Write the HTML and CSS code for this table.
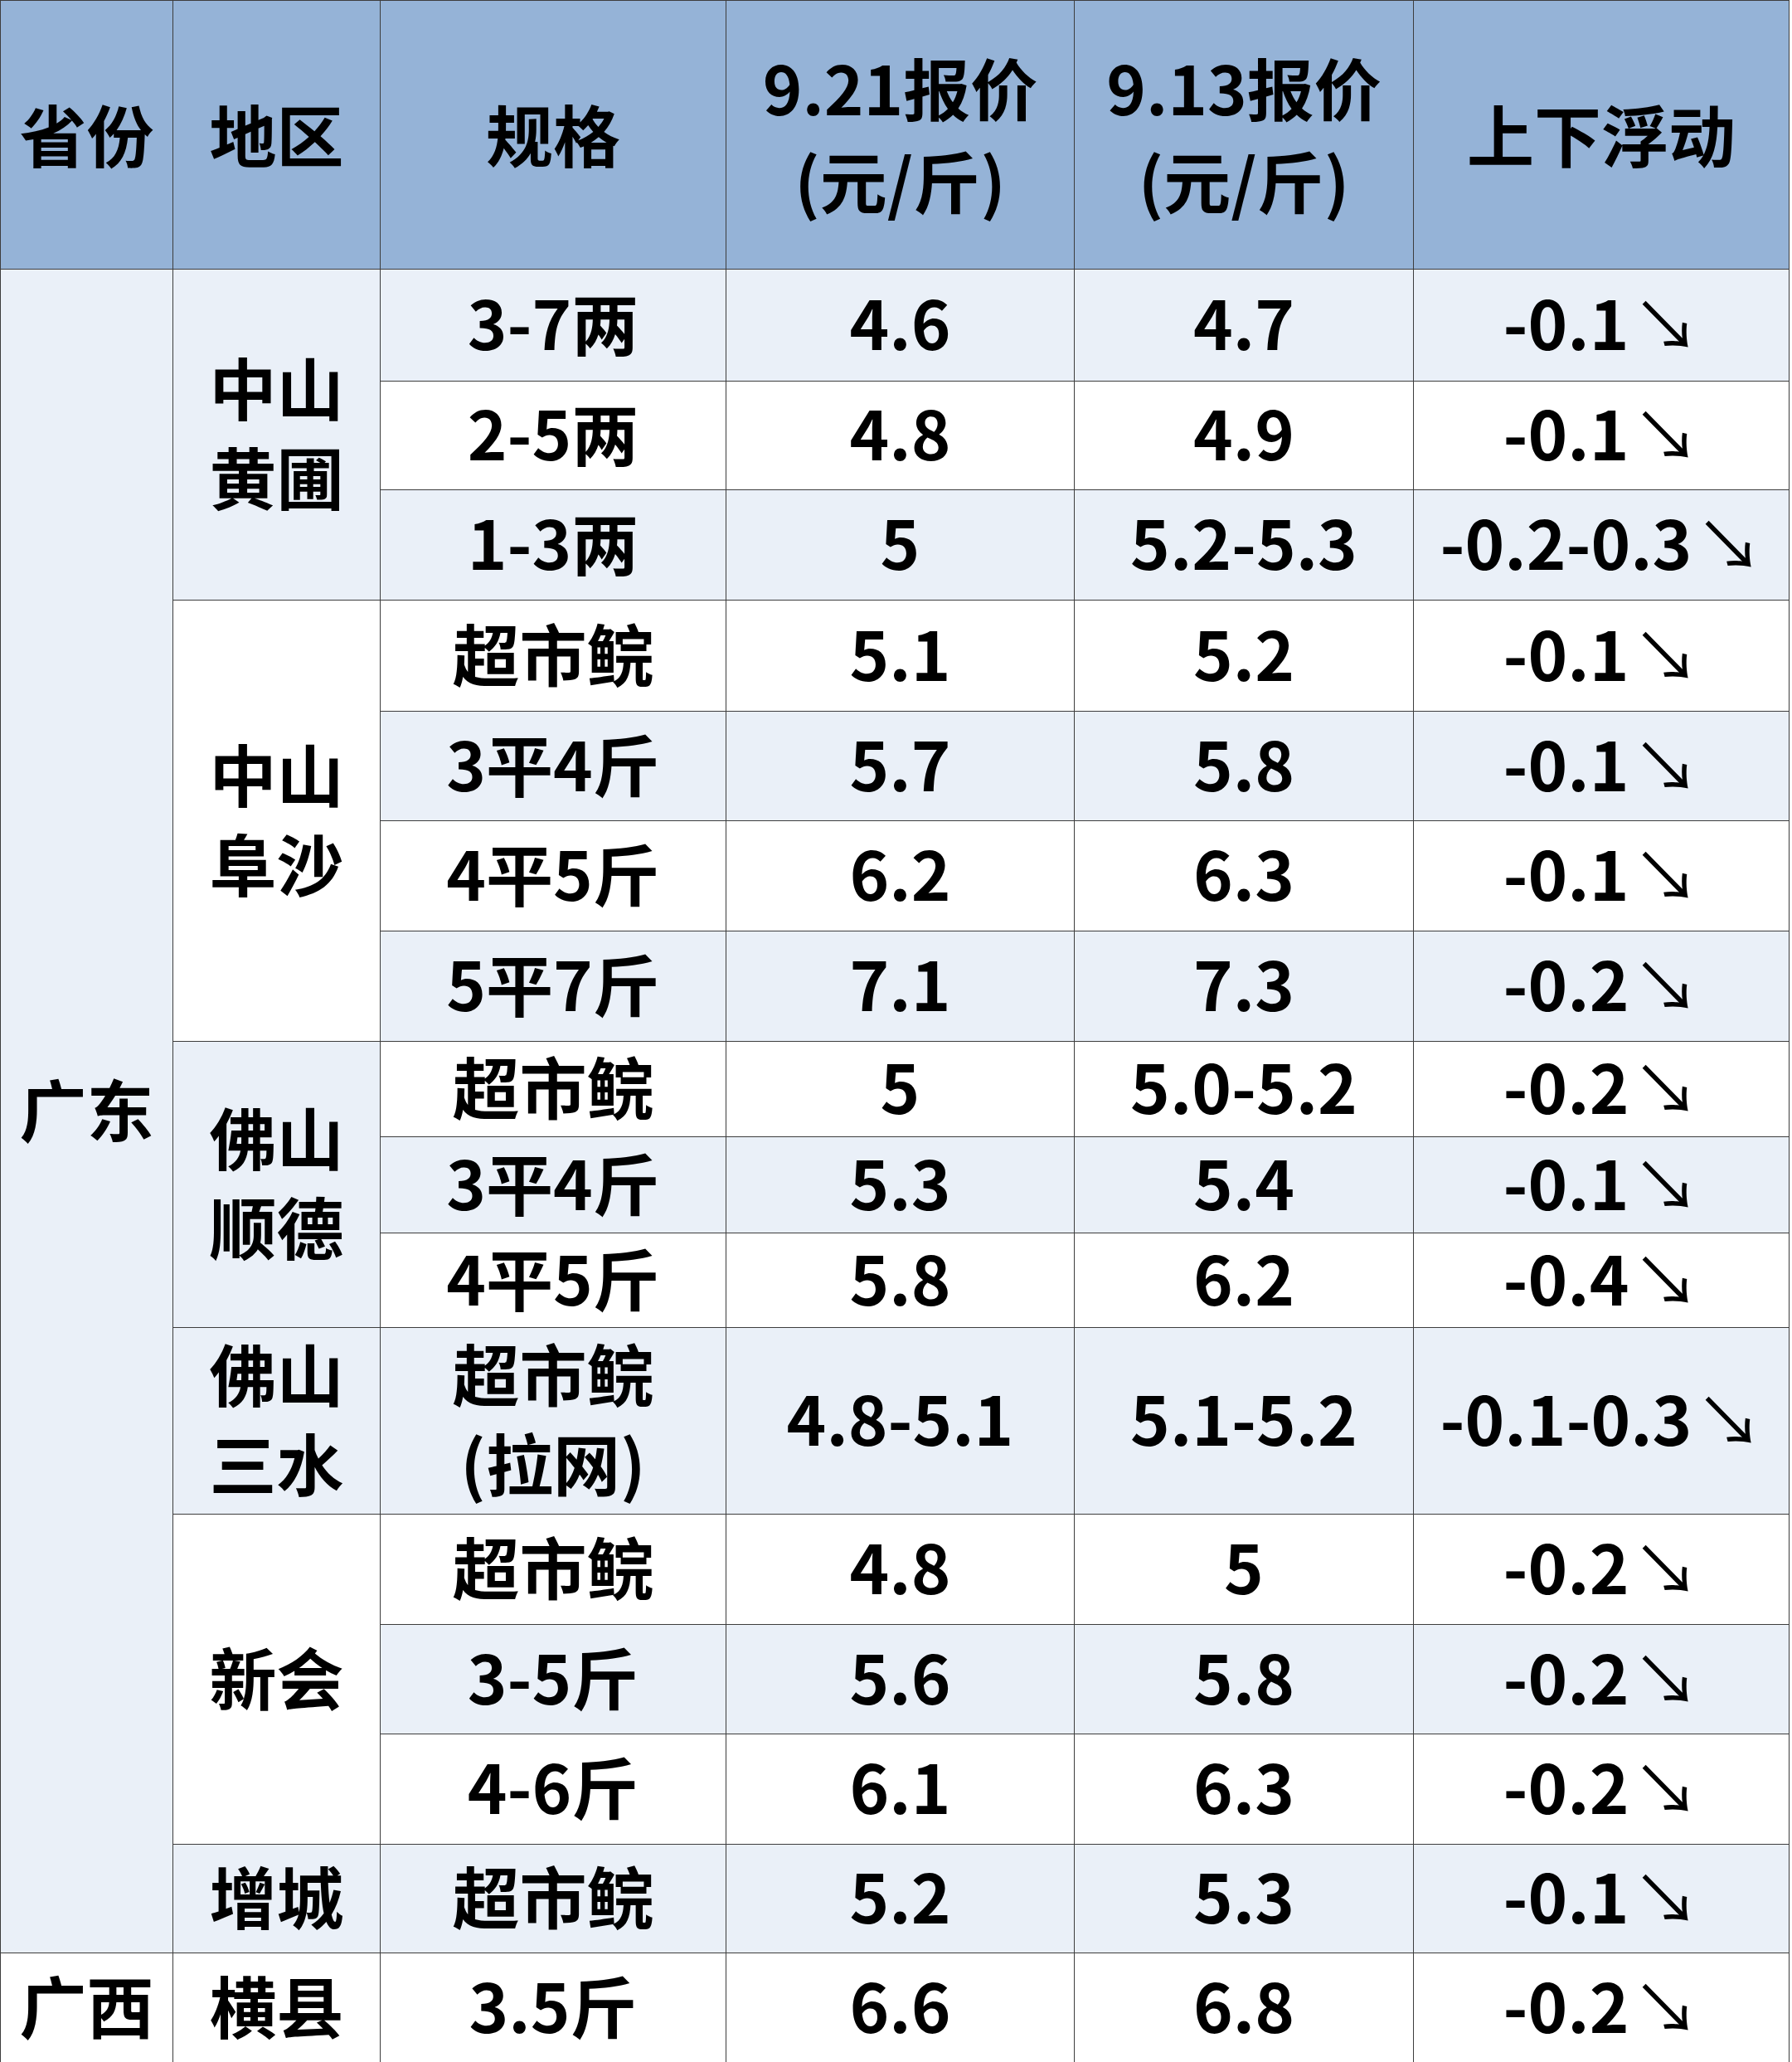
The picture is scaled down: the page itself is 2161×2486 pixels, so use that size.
FILE: index.html
```html
<!DOCTYPE html>
<html lang="zh-CN">
<head>
<meta charset="utf-8">
<title>报价表</title>
<link rel="stylesheet" href="styles.css">
</head>
<body>
<div class="sheet">
  <div class="c hd">省份</div>
  <div class="c hd">地区</div>
  <div class="c hd">规格</div>
  <div class="c hd">9.21报价<br>(元/斤)</div>
  <div class="c hd">9.13报价<br>(元/斤)</div>
  <div class="c hd">上下浮动</div>

  <div class="c l span15">广东</div>
  <div class="c l span3">中山<br>黄圃</div>
  <div class="c l">3-7两</div><div class="c l">4.6</div><div class="c l">4.7</div><div class="c l">-0.1<span class="ar">↘</span></div>
  <div class="c w">2-5两</div><div class="c w">4.8</div><div class="c w">4.9</div><div class="c w">-0.1<span class="ar">↘</span></div>
  <div class="c l">1-3两</div><div class="c l">5</div><div class="c l">5.2-5.3</div><div class="c l">-0.2-0.3<span class="ar">↘</span></div>

  <div class="c w span4">中山<br>阜沙</div>
  <div class="c w">超市鲩</div><div class="c w">5.1</div><div class="c w">5.2</div><div class="c w">-0.1<span class="ar">↘</span></div>
  <div class="c l">3平4斤</div><div class="c l">5.7</div><div class="c l">5.8</div><div class="c l">-0.1<span class="ar">↘</span></div>
  <div class="c w">4平5斤</div><div class="c w">6.2</div><div class="c w">6.3</div><div class="c w">-0.1<span class="ar">↘</span></div>
  <div class="c l">5平7斤</div><div class="c l">7.1</div><div class="c l">7.3</div><div class="c l">-0.2<span class="ar">↘</span></div>

  <div class="c l span3">佛山<br>顺德</div>
  <div class="c w">超市鲩</div><div class="c w">5</div><div class="c w">5.0-5.2</div><div class="c w">-0.2<span class="ar">↘</span></div>
  <div class="c l">3平4斤</div><div class="c l">5.3</div><div class="c l">5.4</div><div class="c l">-0.1<span class="ar">↘</span></div>
  <div class="c w">4平5斤</div><div class="c w">5.8</div><div class="c w">6.2</div><div class="c w">-0.4<span class="ar">↘</span></div>

  <div class="c l">佛山<br>三水</div>
  <div class="c l">超市鲩<br>(拉网)</div><div class="c l">4.8-5.1</div><div class="c l">5.1-5.2</div><div class="c l">-0.1-0.3<span class="ar">↘</span></div>

  <div class="c w span3">新会</div>
  <div class="c w">超市鲩</div><div class="c w">4.8</div><div class="c w">5</div><div class="c w">-0.2<span class="ar">↘</span></div>
  <div class="c l">3-5斤</div><div class="c l">5.6</div><div class="c l">5.8</div><div class="c l">-0.2<span class="ar">↘</span></div>
  <div class="c w">4-6斤</div><div class="c w">6.1</div><div class="c w">6.3</div><div class="c w">-0.2<span class="ar">↘</span></div>

  <div class="c l">增城</div>
  <div class="c l">超市鲩</div><div class="c l">5.2</div><div class="c l">5.3</div><div class="c l">-0.1<span class="ar">↘</span></div>

  <div class="c w">广西</div>
  <div class="c w">横县</div>
  <div class="c w">3.5斤</div><div class="c w">6.6</div><div class="c w">6.8</div><div class="c w">-0.2<span class="ar">↘</span></div>
</div>
</body>
</html>
```
FILE: styles.css
```css
html, body {
  margin: 0;
  padding: 0;
  background: #ffffff;
}

.sheet {
  display: grid;
  width: 2158px;
  box-sizing: border-box;
  grid-template-columns: 207px 249px 416px 419px 408px 452px;
  grid-template-rows: 323px 134px 130px 132px 133px 131px 132px 132px 114px 115px 113px 224px 132px 131px 132px 130px 131px;
  gap: 1px;
  padding: 1px 1px 0 1px;
  background: #3d3d3d;
  font-family: "Noto Sans CJK SC", "Noto Sans", sans-serif;
  font-weight: 700;
  font-size: 81px;
  line-height: 108px;
  color: #000000;
}

.c {
  display: flex;
  align-items: center;
  justify-content: center;
  text-align: center;
  white-space: nowrap;
  box-sizing: border-box;
  padding-bottom: 10px;
}

.hd {
  background: #95b3d7;
  line-height: 112px;
  padding-bottom: 6px;
}

.l {
  background: #eaf0f8;
}

.w {
  background: #ffffff;
}

.ar {
  font-weight: 400;
  margin-left: 4px;
}

.span3 {
  grid-row: span 3;
}

.span4 {
  grid-row: span 4;
}

.span15 {
  grid-row: span 15;
}
```
